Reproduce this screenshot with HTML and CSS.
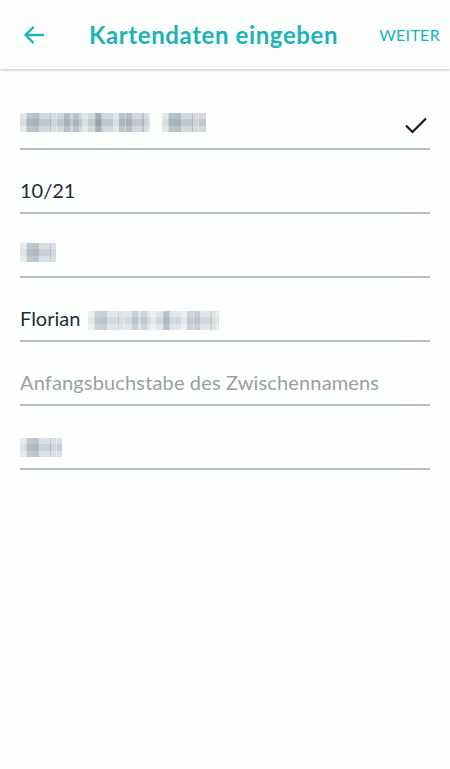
FILE: index.html
```html
<!DOCTYPE html>
<html lang="de">
<head>
    <meta charset="UTF-8">
    <meta name="viewport" content="width=device-width, initial-scale=1.0">
    <title>Kartendaten eingeben</title>
    <link rel="stylesheet" href="styles.css">
</head>
<body>

    <!-- Top bar -->
    <header class="topbar">
        <button class="back" aria-label="Zurück">
            <svg width="24" height="24" viewBox="0 0 24 24">
                <path d="M21 12H4M11 4.5L3.5 12 11 19.5" fill="none" stroke="currentColor" stroke-width="2.4" stroke-linecap="round" stroke-linejoin="round"/>
            </svg>
        </button>
        <h1 class="title">Kartendaten eingeben</h1>
        <a class="next" href="#">WEITER</a>
    </header>

    <!-- Card form -->
    <form class="card-form">
        <div class="field">
            <span class="blur blur-number"></span>
            <span class="blur blur-number blur-number-end"></span>
            <svg class="check" width="24" height="20" viewBox="0 0 24 20">
                <path d="M2 9.5l6.5 6.5L22 2.5" fill="none" stroke="currentColor" stroke-width="2.2"/>
            </svg>
        </div>
        <div class="field">
            <span class="value">10/21</span>
        </div>
        <div class="field">
            <span class="blur blur-cvv"></span>
        </div>
        <div class="field">
            <span class="value">Florian</span>
            <span class="blur blur-last"></span>
        </div>
        <div class="field">
            <span class="placeholder">Anfangsbuchstabe des Zwischennamens</span>
        </div>
        <div class="field">
            <span class="blur blur-short"></span>
        </div>
    </form>

</body>
</html>
```

FILE: styles.css
```css
/* General page styling */
body {
    margin: 0;
    background: #fdfefe;
    font-family: Lato, "Open Sans", Arial, sans-serif;
    color: #1e2d36;
}

/* Top bar */
.topbar {
    display: flex;
    align-items: center;
    height: 69px;
    padding: 0 10px 0 22px;
    background: #fdfefe;
    box-shadow: 0 1px 3px rgba(0, 0, 0, 0.25);
    color: #1bb3b9;
}

.back {
    display: flex;
    padding: 0;
    border: 0;
    background: none;
    color: inherit;
}

.title {
    flex: 1;
    margin: 0 0 0 43px;
    font-size: 24px;
    font-weight: 700;
    letter-spacing: 0.6px;
}

.next {
    color: inherit;
    font-size: 16px;
    letter-spacing: 0.3px;
    text-decoration: none;
}

/* Form fields */
.card-form {
    padding: 17px 20px 0;
}

.field {
    display: flex;
    align-items: center;
    height: 62px;
    border-bottom: 2px solid #b9bdc0;
}

.field > * {
    margin-top: 18px;
}

.value {
    font-size: 20px;
}

.placeholder {
    font-size: 20px;
    letter-spacing: 0.15px;
    color: #9b9fa2;
}

.check {
    margin-left: auto;
    margin-right: 2px;
    color: #151a1d;
}

/* Pixelated (redacted) values */
.blur {
    display: inline-block;
    height: 19px;
    background-color: #c9d1d6;
    background-image:
        repeating-linear-gradient(90deg, rgba(255,255,255,0.4) 0 6px, transparent 6px 13px, rgba(80,100,115,0.22) 13px 19px, transparent 19px 31px),
        repeating-linear-gradient(90deg, transparent 0 7px, rgba(90,110,125,0.2) 7px 13px, transparent 13px 23px),
        repeating-linear-gradient(0deg, rgba(255,255,255,0.3) 0 6px, transparent 6px 13px);
}

.field > .blur-number {
    width: 130px;
    margin-top: 11px;
    background-color: #bfc8ce;
}

.field > .blur-number-end {
    width: 44px;
    margin-left: 12px;
}

.field > .blur-cvv {
    width: 36px;
    margin-top: 15px;
}

.field > .blur-last {
    width: 131px;
    margin-left: 8px;
    margin-top: 22px;
    opacity: 0.8;
}

.field > .blur-short {
    width: 42px;
    margin-top: 21px;
}
```
